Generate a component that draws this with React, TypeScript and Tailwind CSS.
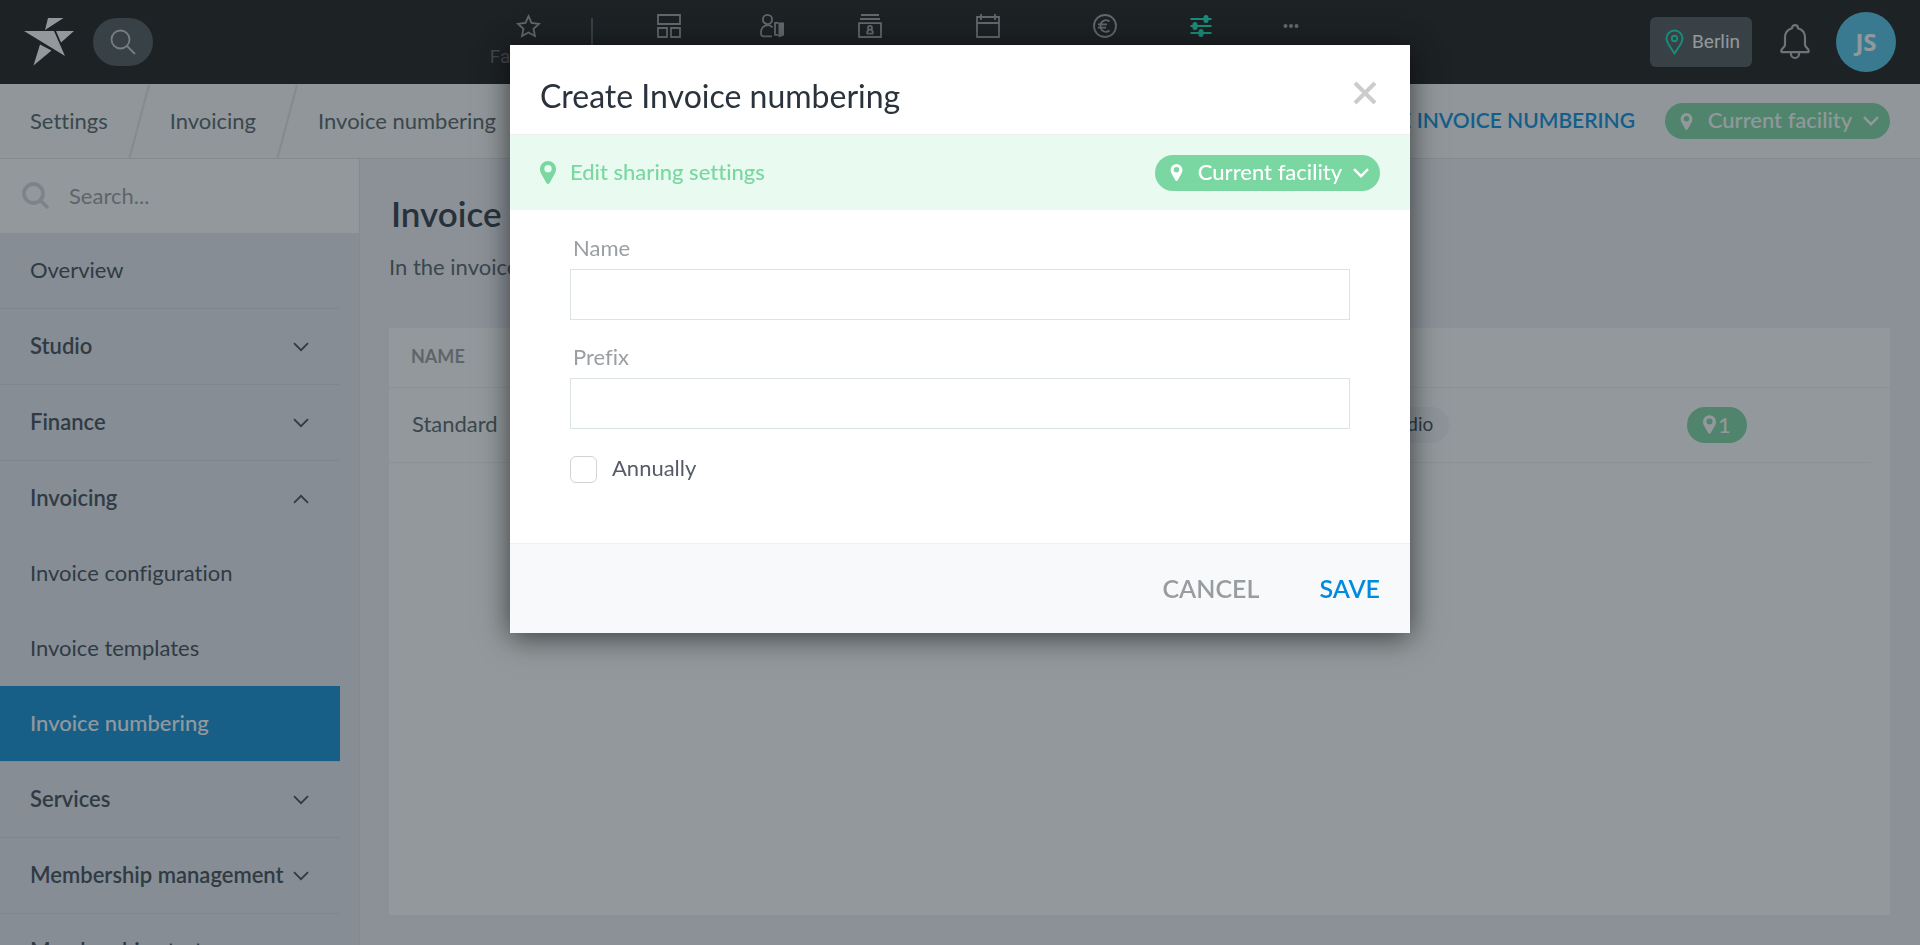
import React, { useState } from "react";

type SidebarItem = {
  label: string;
  kind: "link" | "group" | "child";
  open?: boolean;
  active?: boolean;
};

const sidebarItems: SidebarItem[] = [
  { label: "Overview", kind: "link" },
  { label: "Studio", kind: "group" },
  { label: "Finance", kind: "group" },
  { label: "Invoicing", kind: "group", open: true },
  { label: "Invoice configuration", kind: "child" },
  { label: "Invoice templates", kind: "child" },
  { label: "Invoice numbering", kind: "child", active: true },
  { label: "Services", kind: "group" },
  { label: "Membership management", kind: "group" },
  { label: "Membership start", kind: "group" },
];

const breadcrumbs = ["Settings", "Invoicing", "Invoice numbering"];

const Chevron: React.FC<{ className?: string; thick?: boolean }> = ({
  className,
  thick,
}) => (
  <svg
    className={className}
    width="16"
    height="10"
    viewBox="0 0 16 10"
    fill="none"
    stroke="currentColor"
    strokeWidth={thick ? 2.4 : 1.8}
    aria-hidden="true"
  >
    <path d="M1 1.2 8 8.2 15 1.2" />
  </svg>
);

const Pin: React.FC<{ width: number; height: number }> = ({ width, height }) => (
  <svg
    width={width}
    height={height}
    viewBox="0 0 16 23"
    fill="currentColor"
    aria-hidden="true"
  >
    <path
      fillRule="evenodd"
      d="M8 0a8 8 0 0 0-8 8c0 2 .6 3.600 1.500 5.300L6.400 22a1.800 1.800 0 0 0 3.200 0l4.900-8.700C15.400 11.600 16 10 16 8a8 8 0 0 0-8-8Zm0 4a3.700 3.700 0 1 1 0 7.400A3.700 3.700 0 0 1 8 4Z"
    />
  </svg>
);

const FacilityButton: React.FC = () => (
  <button
    type="button"
    className="flex h-9 w-[225px] items-center rounded-full bg-[#7ad7a1] pl-[15px] pr-[11px] text-[22px] font-medium text-white"
  >
    <Pin width={13} height={17} />
    <span className="flex-1 pb-[2px] pl-1 text-center leading-7">
      Current facility
    </span>
    <Chevron thick />
  </button>
);

const navItems = [
  {
    name: "Dashboard",
    width: "w-[124px]",
    icon: <path d="M1 1h22v9H1zM1 14h9v9H1zM14 14h9v9h-9z" />,
  },
  {
    name: "Check-in",
    width: "w-[82px]",
    icon: (
      <>
        <circle cx="7.500" cy="5.500" r="4.600" />
        <path d="M12.500 13.500c-1-1.500-2.500-2.300-4.500-2.300C3.900 11.200 1 14.300 1 18v1.500C1 21.400 2.200 22.400 4 22.400h8M18.500 8.900H15v12h3.500" />
        <path d="M18.500 8.500H24V21.500l-5.500 2z" fill="currentColor" stroke="none" />
      </>
    ),
  },
  {
    name: "Members",
    width: "w-[114px]",
    icon: (
      <>
        <path d="M3 1h18M2 5h20M1 9.200h22V23H1z" />
        <circle cx="12" cy="13.800" r="2" />
        <path d="M10.700 15.800c-1.300.8-1.700 2.200-1.400 3.800h5.400c.3-1.600-.1-3-1.400-3.800" />
      </>
    ),
  },
  {
    name: "Calendar",
    width: "w-[122px]",
    icon: <path d="M1 3h22v20H1zM1 9h22M5 0v6M19 0v6" />,
  },
  {
    name: "Finance",
    width: "w-[112px]",
    icon: (
      <>
        <circle cx="12" cy="12" r="11" />
        <path d="M16.500 7.500A5.500 5.500 0 0 0 7.500 12a5.500 5.500 0 0 0 9 4.500M5 10.300h9M5 13.700h8" />
      </>
    ),
  },
];

const Logo: React.FC = () => (
  <svg width="50" height="48" viewBox="0 0 50 48" fill="#fff" aria-hidden="true">
    <path d="M24 0h15.500L21 12zM0 13h30l11 25zM32 13h18L37 24.500zM16 26.500l11.500 6L9.500 47.500z" />
  </svg>
);

const TopBar: React.FC = () => (
  <header className="flex h-[84px] shrink-0 items-center bg-[#141212] pl-6 pr-6 font-['Roboto',sans-serif]">
    <a href="#" aria-label="Home">
      <Logo />
    </a>
    <button
      type="button"
      aria-label="Search"
      className="ml-[19px] flex h-12 w-[60px] items-center justify-center rounded-full bg-[#4a5052] text-[#c9c9c9]"
    >
      <svg width="26" height="26" viewBox="0 0 26 26" fill="none" stroke="currentColor" strokeWidth="1.800">
        <circle cx="10.500" cy="10.500" r="9" />
        <path d="M17 17l8 8" />
      </svg>
    </button>

    <nav className="mx-auto flex h-full items-start pl-[18px] pt-[14px] text-[#9d9d9d]">
      <a href="#" className="flex w-24 flex-col items-center">
        <svg width="25" height="24" viewBox="0 0 24 24" fill="none" stroke="currentColor" strokeWidth="1.800">
          <path d="M12 2.200l3 6.700 7.500.9-5.500 5 1.500 7.300-6.500-3.600-6.500 3.600L7 14.800l-5.500-5L9 8.900z" />
        </svg>
        <span className="mt-1 text-[19px] leading-[30px] text-[#5c5c5c]">Favorites</span>
      </a>
      <div className="mx-[14px] mt-1 h-12 w-[2px] bg-[#4a5052]" />
      {navItems.map((item) => (
        <a
          key={item.name}
          href="#"
          aria-label={item.name}
          className={`flex justify-center ${item.width}`}
        >
          <svg width="24" height="24" viewBox="0 0 24 24" fill="none" stroke="currentColor" strokeWidth="1.800">
            {item.icon}
          </svg>
        </a>
      ))}
      <a href="#" aria-label="Settings" className="flex w-20 justify-center text-[#10e6bc]">
        <svg width="22" height="24" viewBox="0 0 22 24" fill="none" stroke="currentColor" strokeWidth="2">
          <path d="M.5 5h21M.5 12h21M.5 19h21" />
          <path d="M16 3.500v3M5 10.500v3M11 17.500v3" strokeWidth="5" strokeLinecap="round" />
        </svg>
      </a>
      <button type="button" aria-label="More" className="flex w-[100px] justify-center">
        <svg width="16" height="24" viewBox="0 0 16 24" fill="currentColor">
          <circle cx="2.500" cy="12" r="2" />
          <circle cx="8" cy="12" r="2" />
          <circle cx="13.500" cy="12" r="2" />
        </svg>
      </button>
    </nav>

    <button
      type="button"
      className="flex h-[50px] w-[102px] items-center gap-2 rounded-md bg-[#4a5052] pl-[15px] text-[19px] text-white"
    >
      <svg width="19" height="26" viewBox="0 0 19 26" fill="none" stroke="#10e6bc" strokeWidth="1.900">
        <path d="M9.500 24.500C7 20 1.500 14.500 1.500 9.500a8 8 0 0 1 16 0c0 5-5.500 10.500-8 15z" />
        <circle cx="9.500" cy="9.500" r="2.700" />
      </svg>
      Berlin
    </button>
    <button type="button" aria-label="Notifications" className="ml-7 text-[#b4b4b4]">
      <svg width="30" height="36" viewBox="0 0 30 36" fill="none" stroke="currentColor" strokeWidth="2.200">
        <path d="M12 4.200a3 3 0 0 1 6 0c4.500 1.200 7 4.800 7 9.500v7c0 2.500 3.700 4 3.700 6 0 1-.7 1.500-1.500 1.500H2.800c-.8 0-1.500-.5-1.500-1.500 0-2 3.700-3.500 3.700-6v-7c0-4.700 2.500-8.300 7-9.500z" strokeLinejoin="round" />
        <path d="M11 28.500v1.500a4 4 0 0 0 8 0v-1.500" />
      </svg>
    </button>
    <button
      type="button"
      className="ml-[26px] h-[60px] w-[60px] rounded-full bg-[#4ec2ea] font-['Open_Sans',sans-serif] text-2xl font-bold text-white"
    >
      JS
    </button>
  </header>
);

const Breadcrumbs: React.FC = () => (
  <div className="flex h-[75px] shrink-0 items-center border-b border-[#e2e4e6] bg-[#fafafa] pr-[30px] text-[22px] text-[#4f5c64]">
    <nav aria-label="Breadcrumb" className="flex h-full items-center pl-[30px]">
      {breadcrumbs.map((crumb, index) => (
        <React.Fragment key={crumb}>
          {index > 0 && (
            <svg className="mx-5" width="22" height="74" viewBox="0 0 22 74" fill="none" stroke="#e2e4e6" strokeWidth="2" aria-hidden="true">
              <path d="M21 1 1.500 74" />
            </svg>
          )}
          <a href="#" className="pb-[2px]">
            {crumb}
          </a>
        </React.Fragment>
      ))}
    </nav>
    <button
      type="button"
      className="ml-auto mr-[30px] pb-[2px] text-[21px] font-semibold text-[#008bdc]"
    >
      CREATE INVOICE NUMBERING
    </button>
    <FacilityButton />
  </div>
);

const Sidebar: React.FC = () => (
  <aside className="w-[360px] shrink-0 overflow-hidden border-r border-[#e0e2ea] bg-[#e6e9f0] text-[22px] text-[#3a4450]">
    <label className="flex h-[74px] items-center bg-white pl-[22px]">
      <svg width="28" height="28" viewBox="0 0 28 28" fill="none" stroke="#d5d5d9" strokeWidth="3.800" aria-hidden="true">
        <circle cx="11.500" cy="11.500" r="9.500" />
        <path d="M18 18l8 8" />
      </svg>
      <input
        type="text"
        aria-label="Search settings"
        placeholder="Search..."
        className="ml-[19px] w-60 bg-transparent pb-[2px] outline-none placeholder:text-[#96999c]"
      />
    </label>
    <nav className="w-[340px]">
      {sidebarItems.map((item) => {
        if (item.kind === "child") {
          return (
            <a
              key={item.label}
              href="#"
              className={`flex items-center pb-[2px] pl-[30px] ${
                item.active
                  ? "h-[76px] border-b border-[#d8dbe0] bg-[#0a8cd9] bg-clip-padding font-medium text-white"
                  : "h-[75px]"
              }`}
            >
              {item.label}
            </a>
          );
        }
        if (item.kind === "link") {
          return (
            <a
              key={item.label}
              href="#"
              className="flex h-[76px] items-center border-b border-[#d8dbe0] pb-[2px] pl-[30px]"
            >
              {item.label}
            </a>
          );
        }
        return (
          <button
            key={item.label}
            type="button"
            aria-expanded={!!item.open}
            className={`flex w-full items-center justify-between whitespace-nowrap pl-[30px] pr-[31px] font-semibold ${
              item.open ? "h-[75px]" : "h-[76px] border-b border-[#d8dbe0]"
            }`}
          >
            <span className="pb-[2px]">{item.label}</span>
            <Chevron className={item.open ? "rotate-180" : ""} />
          </button>
        );
      })}
    </nav>
  </aside>
);

const NumberingTable: React.FC = () => (
  <main className="flex min-w-0 flex-1 flex-col bg-[#f2f1f9] px-[30px] pb-[30px] pl-[29px] pt-[30px]">
    <h1 className="pl-[2px] text-[35px] font-semibold leading-12 text-[#2a323c]">
      Invoice numbering
    </h1>
    <p className="mt-4 text-[22px] leading-7 text-[#4f5c64]">
      In the invoice numbering you can manage your number ranges.
    </p>
    <div className="mt-[47px] flex-1 bg-white">
      <table className="w-full table-fixed border-collapse text-left">
        <colgroup>
          <col />
          <col className="w-[323px]" />
          <col className="w-[184px]" />
          <col className="w-[19px]" />
        </colgroup>
        <thead>
          <tr className="h-[59px] border-b border-[#f0f2f3] text-lg text-[#96999c]">
            <th className="pb-[2px] pl-[22px] font-bold">NAME</th>
            <th />
            <th />
            <th />
          </tr>
        </thead>
        <tbody>
          <tr className="h-[75px]">
            <td className="border-b border-[#f0f2f3] pb-[2px] pl-[23px] text-[22px] text-[#4f5c64]">
              Standard
            </td>
            <td className="border-b border-[#f0f2f3]">
              <span className="flex h-9 w-fit items-center rounded-full bg-[#f4f4f8] px-4 text-[19px] text-[#3a4450]">
                Studio
              </span>
            </td>
            <td className="border-b border-[#f0f2f3]">
              <span className="flex h-9 w-[60px] items-center justify-center gap-[2px] rounded-full bg-[#7ad7a1] text-[22px] font-medium text-white">
                <Pin width={13} height={19} />1
              </span>
            </td>
            <td />
          </tr>
        </tbody>
      </table>
    </div>
  </main>
);

const CreateNumberingModal: React.FC = () => {
  const [name, setName] = useState("");
  const [prefix, setPrefix] = useState("");
  const [annually, setAnnually] = useState(false);

  return (
    <div className="fixed inset-0 z-10 flex items-start justify-center bg-[#263238]/50 pt-[45px]">
      <form
        role="dialog"
        aria-labelledby="modal-title"
        onSubmit={(e) => e.preventDefault()}
        className="w-full max-w-[900px] bg-white shadow-[0_4px_28px_rgba(0,0,0,0.6)]"
      >
        <div className="flex h-[90px] items-center justify-between border-b border-[#eeeff0] pl-[30px] pr-[33px] pt-[6px]">
          <h2 id="modal-title" className="pt-[6px] text-[32px] text-[#2a323c]">
            Create Invoice numbering
          </h2>
          <button type="button" aria-label="Close" className="text-[#cccccc]">
            <svg width="24" height="24" viewBox="0 0 24 24" fill="none" stroke="currentColor" strokeWidth="4">
              <path d="M2 2l20 20M22 2 2 22" />
            </svg>
          </button>
        </div>

        <div className="flex h-[75px] items-center bg-[#e9faf0] px-[30px] text-[#7ad7a1]">
          <Pin width={16} height={23} />
          <span className="ml-[14px] mr-auto pb-[2px] text-[22px] font-medium">
            Edit sharing settings
          </span>
          <FacilityButton />
        </div>

        <div className="px-[60px] pb-[60px] pt-[23px] text-[22px]">
          <label htmlFor="name" className="block h-9 pl-[3px] leading-[30px] text-[#999fa3]">
            Name
          </label>
          <input
            id="name"
            type="text"
            value={name}
            onChange={(e) => setName(e.target.value)}
            className="block h-[51px] w-full border border-[#dce3e4] px-3 outline-none"
          />
          <label htmlFor="prefix" className="mt-[22px] block h-9 pl-[3px] leading-[30px] text-[#999fa3]">
            Prefix
          </label>
          <input
            id="prefix"
            type="text"
            value={prefix}
            onChange={(e) => setPrefix(e.target.value)}
            className="block h-[51px] w-full border border-[#dce3e4] px-3 outline-none"
          />
          <div className="mt-[27px] flex h-[27px] items-center">
            <input
              id="annually"
              type="checkbox"
              checked={annually}
              onChange={(e) => setAnnually(e.target.checked)}
              className="h-[27px] w-[27px] appearance-none rounded-md border border-[#d2d3d6] checked:bg-[#7ad7a1]"
            />
            <label htmlFor="annually" className="pb-1 pl-[15px] text-[#555c68]">
              Annually
            </label>
          </div>
        </div>

        <div className="flex h-[90px] items-center justify-end gap-[60px] border-t border-[#eeeff0] bg-[#f8f9fb] pr-[30px] text-[25px] font-semibold">
          <button type="button" className="text-[#999da0]">
            CANCEL
          </button>
          <button type="submit" className="text-[#008bdc]">
            SAVE
          </button>
        </div>
      </form>
    </div>
  );
};

const App: React.FC = () => {
  return (
    <div className="flex h-screen flex-col overflow-hidden font-['Lato',sans-serif] [font-variant-ligatures:none]">
      <TopBar />
      <Breadcrumbs />
      <div className="flex min-h-0 flex-1">
        <Sidebar />
        <NumberingTable />
      </div>
      <CreateNumberingModal />
    </div>
  );
};

export default App;
